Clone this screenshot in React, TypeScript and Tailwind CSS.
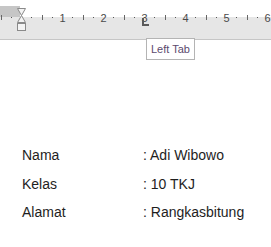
import React from 'react';

const UNIT = 41;
const ZERO = 21;

const marks = Array.from({ length: 27 }, (_, i) => i - 2);

const Ruler: React.FC = () => (
  <div className="relative h-[34px] bg-[#e6e6e6] border-b border-[#c6c6c6]">
    <div className="flex h-[11px] mt-[6px]">
      <div className="w-[20px] bg-[#c6c6c6]" />
      <div className="flex-1 bg-white" />
    </div>
    <svg className="absolute left-0 top-0" width="271" height="33">
      {marks.map((k) => {
        const x = Math.round(ZERO + (k * UNIT) / 4);
        if (k % 4 === 0) {
          if (k === 0) return null;
          return (
            <text
              key={k}
              x={x + 0.5}
              y={16}
              textAnchor="middle"
              fontSize="11"
              fontFamily="Liberation Sans, sans-serif"
              fill="#4a4a4a"
            >
              {Math.abs(k / 4)}
            </text>
          );
        }
        if (Math.abs(k) % 2 === 1) {
          return <rect key={k} x={x} y={11} width={1} height={1} fill="#555" />;
        }
        return <rect key={k} x={x} y={9} width={1} height={5} fill="#666" />;
      })}
      {/* first line + hanging indent */}
      <path d="M17.5 2.5 H25.5 L21.5 9.5 L25.5 16.5 H17.5 L21.5 9.5 Z" fill="#f4f4f4" stroke="#8a8a8a" />
      {/* left indent */}
      <rect x="17.5" y="17.5" width="8" height="7" fill="#f4f4f4" stroke="#8a8a8a" />
      {/* left tab stop */}
      <path d="M143 12 V19 H149" fill="none" stroke="#5a5a5a" strokeWidth="2" />
    </svg>
  </div>
);

const rows = [
  ['Nama', ': Adi Wibowo'],
  ['Kelas', ': 10 TKJ'],
  ['Alamat', ': Rangkasbitung'],
];

export default function App() {
  return (
    <div className="relative w-[271px] h-[247px] bg-white overflow-hidden font-['Liberation_Sans',sans-serif]">
      <Ruler />
      <div className="absolute left-[146px] top-[38px] h-[22px] px-[4px] flex items-center bg-white border border-[#b4b4b4] text-[11px] text-[#5b4a6e]">
        Left Tab
      </div>
      <div className="pt-[101px] pl-[22px] text-[14px] leading-[28.5px] text-[#1e1e1e]">
        {rows.map(([label, value]) => (
          <div key={label} className="grid grid-cols-[121px_1fr]">
            <span>{label}</span>
            <span>{value}</span>
          </div>
        ))}
      </div>
    </div>
  );
}
